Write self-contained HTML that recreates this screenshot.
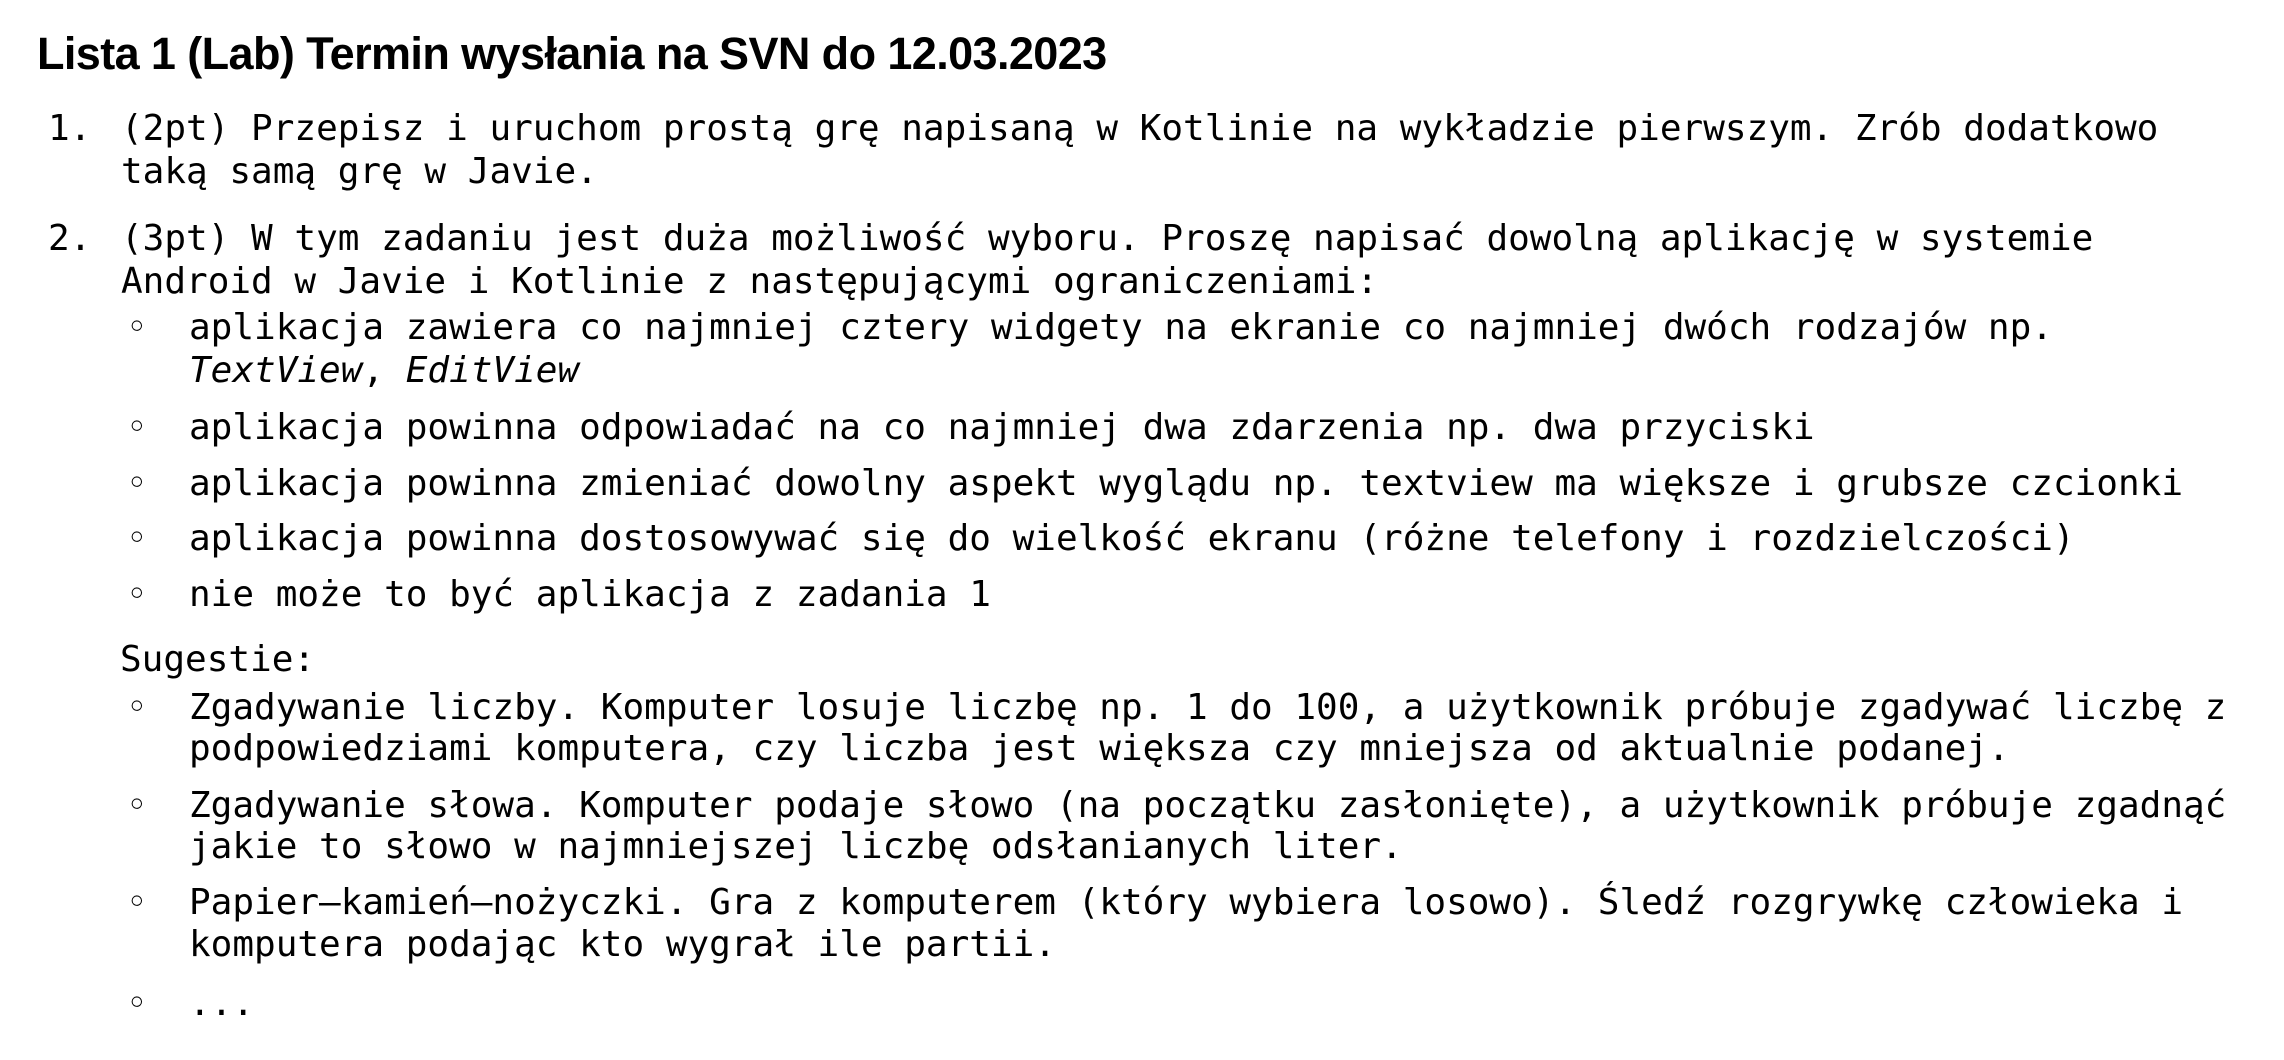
<!DOCTYPE html>
<html><head><meta charset="utf-8"><style>
html,body{margin:0;padding:0;background:#fff;width:2284px;height:1060px;overflow:hidden;color:#000}
.t{position:absolute;left:37px;top:27px;font:bold 45px "Liberation Sans",sans-serif;line-height:54px;white-space:nowrap;letter-spacing:-0.6px}
.l{position:absolute;font-family:"DejaVu Sans Mono","Liberation Mono",monospace;font-size:36px;line-height:42px;height:42px;white-space:pre}
i{font-style:italic}
</style></head><body>
<div class="t">Lista 1 (Lab) Termin wysłania na SVN do 12.03.2023</div>
<div class="l" style="left:48px;top:108px">1.</div>
<div class="l" style="left:121px;top:108px">(2pt) Przepisz i uruchom prostą grę napisaną w Kotlinie na wykładzie pierwszym. Zrób dodatkowo</div>
<div class="l" style="left:121px;top:151px">taką samą grę w Javie.</div>
<div class="l" style="left:48px;top:218px">2.</div>
<div class="l" style="left:121px;top:218px">(3pt) W tym zadaniu jest duża możliwość wyboru. Proszę napisać dowolną aplikację w systemie</div>
<div class="l" style="left:121px;top:261px">Android w Javie i Kotlinie z następującymi ograniczeniami:</div>
<div class="l" style="left:126px;top:307px">◦</div>
<div class="l" style="left:189px;top:307px">aplikacja zawiera co najmniej cztery widgety na ekranie co najmniej dwóch rodzajów np.</div>
<div class="l" style="left:189px;top:350px"><i>TextView</i>, <i>EditView</i></div>
<div class="l" style="left:126px;top:407px">◦</div>
<div class="l" style="left:189px;top:407px">aplikacja powinna odpowiadać na co najmniej dwa zdarzenia np. dwa przyciski</div>
<div class="l" style="left:126px;top:463px">◦</div>
<div class="l" style="left:189px;top:463px">aplikacja powinna zmieniać dowolny aspekt wyglądu np. textview ma większe i grubsze czcionki</div>
<div class="l" style="left:126px;top:518px">◦</div>
<div class="l" style="left:189px;top:518px">aplikacja powinna dostosowywać się do wielkość ekranu (różne telefony i rozdzielczości)</div>
<div class="l" style="left:126px;top:574px">◦</div>
<div class="l" style="left:189px;top:574px">nie może to być aplikacja z zadania 1</div>
<div class="l" style="left:120px;top:639px">Sugestie:</div>
<div class="l" style="left:126px;top:687px">◦</div>
<div class="l" style="left:189px;top:687px">Zgadywanie liczby. Komputer losuje liczbę np. 1 do 100, a użytkownik próbuje zgadywać liczbę z</div>
<div class="l" style="left:189px;top:728px">podpowiedziami komputera, czy liczba jest większa czy mniejsza od aktualnie podanej.</div>
<div class="l" style="left:126px;top:785px">◦</div>
<div class="l" style="left:189px;top:785px">Zgadywanie słowa. Komputer podaje słowo (na początku zasłonięte), a użytkownik próbuje zgadnąć</div>
<div class="l" style="left:189px;top:826px">jakie to słowo w najmniejszej liczbę odsłanianych liter.</div>
<div class="l" style="left:126px;top:882px">◦</div>
<div class="l" style="left:189px;top:882px">Papier–kamień–nożyczki. Gra z komputerem (który wybiera losowo). Śledź rozgrywkę człowieka i</div>
<div class="l" style="left:189px;top:924px">komputera podając kto wygrał ile partii.</div>
<div class="l" style="left:126px;top:983px">◦</div>
<div class="l" style="left:189px;top:983px">...</div>
</body></html>
